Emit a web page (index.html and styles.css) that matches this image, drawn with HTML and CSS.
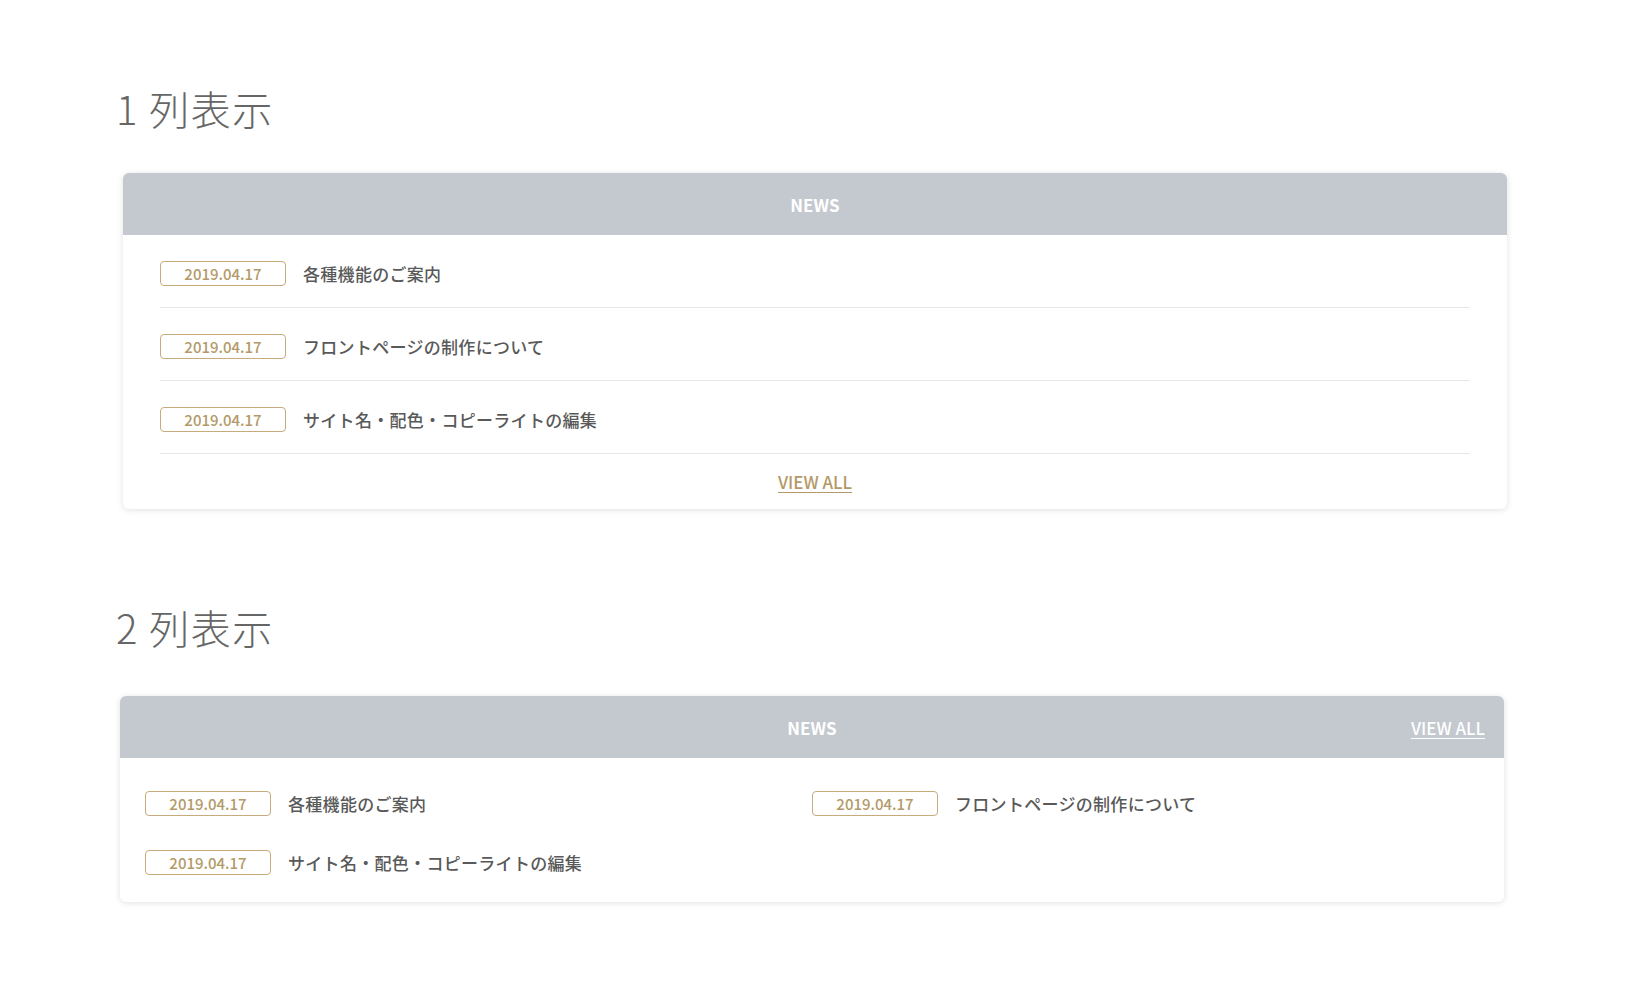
FILE: index.html
```html
<!DOCTYPE html>
<html lang="ja">
<head>
  <meta charset="UTF-8">
  <title>ニュース一覧</title>
  <link rel="stylesheet" href="styles.css">
</head>
<body>

  <section class="bloque bloque-uno">
    <h2 class="titulo">1 列表示</h2>

    <div class="tarjeta">
      <div class="cabecera">
        <span class="cabecera-nombre">NEWS</span>
      </div>
      <ul class="lista">
        <li class="noticia">
          <span class="fecha">2019.04.17</span>
          <a class="noticia-titulo" href="#">各種機能のご案内</a>
        </li>
        <li class="noticia">
          <span class="fecha">2019.04.17</span>
          <a class="noticia-titulo" href="#">フロントページの制作について</a>
        </li>
        <li class="noticia">
          <span class="fecha">2019.04.17</span>
          <a class="noticia-titulo" href="#">サイト名・配色・コピーライトの編集</a>
        </li>
      </ul>
      <div class="pie">
        <a class="ver-todo" href="#">VIEW ALL</a>
      </div>
    </div>
  </section>

  <section class="bloque bloque-dos">
    <h2 class="titulo">2 列表示</h2>

    <div class="tarjeta">
      <div class="cabecera cabecera-doble">
        <span></span>
        <span class="cabecera-nombre">NEWS</span>
        <a class="ver-todo ver-todo-blanco" href="#">VIEW ALL</a>
      </div>
      <ul class="lista-doble">
        <li class="noticia-corta">
          <span class="fecha">2019.04.17</span>
          <a class="noticia-titulo" href="#">各種機能のご案内</a>
        </li>
        <li class="noticia-corta">
          <span class="fecha">2019.04.17</span>
          <a class="noticia-titulo" href="#">フロントページの制作について</a>
        </li>
        <li class="noticia-corta">
          <span class="fecha">2019.04.17</span>
          <a class="noticia-titulo" href="#">サイト名・配色・コピーライトの編集</a>
        </li>
      </ul>
    </div>
  </section>

</body>
</html>
```

FILE: styles.css
```css
body {
  margin: 0;
  padding-bottom: 60px;
  font-family: "Noto Sans CJK JP", "Noto Sans", sans-serif;
  background-color: #ffffff;
  color: #555555;
}

.bloque {
  width: 1384px;
}

.bloque-uno {
  margin: 78px 0 0 123px;
}

.bloque-dos {
  margin: 88px 0 0 120px;
}

.titulo {
  margin: 0 0 35px -7px;
  font-size: 40px;
  line-height: 60px;
  font-weight: 300;
  letter-spacing: 1.5px;
  color: #666666;
}

.bloque-dos .titulo {
  margin: 0 0 39px -4px;
}

.tarjeta {
  background: #ffffff;
  border-radius: 6px;
  box-shadow: 0 1px 6px rgba(0, 0, 0, 0.12);
  overflow: hidden;
}

.cabecera {
  height: 62px;
  display: flex;
  align-items: center;
  justify-content: center;
  background-color: #c4c8cf;
}

.cabecera-doble {
  display: grid;
  grid-template-columns: 1fr auto 1fr;
  padding: 0 19px;
}

.cabecera-nombre {
  color: #ffffff;
  font-size: 17px;
  font-weight: 700;
}

.lista {
  list-style: none;
  margin: 0;
  padding: 0 37px;
}

.noticia {
  display: flex;
  align-items: center;
  padding: 26px 0 21px;
  border-bottom: 1px solid #e6e6e6;
}

.fecha {
  box-sizing: border-box;
  width: 126px;
  height: 25px;
  margin-right: 17px;
  border: 1px solid #c7ab7c;
  border-radius: 4px;
  display: flex;
  align-items: center;
  justify-content: center;
  font-size: 15px;
  font-weight: 500;
  color: #b39a68;
  flex-shrink: 0;
}

.noticia-titulo {
  font-size: 17px;
  font-weight: 500;
  letter-spacing: 0.3px;
  color: #595959;
  text-decoration: none;
}

.pie {
  height: 55px;
  display: flex;
  align-items: center;
  justify-content: center;
}

.ver-todo {
  font-size: 17px;
  font-weight: 500;
  color: #b39a68;
  text-decoration: underline;
  text-underline-offset: 3px;
}

.ver-todo-blanco {
  justify-self: end;
  color: #ffffff;
}

.lista-doble {
  list-style: none;
  margin: 0;
  padding: 33px 25px 27px;
  display: grid;
  grid-template-columns: 1fr 1fr;
  row-gap: 34px;
}

.noticia-corta {
  display: flex;
  align-items: center;
}
```
